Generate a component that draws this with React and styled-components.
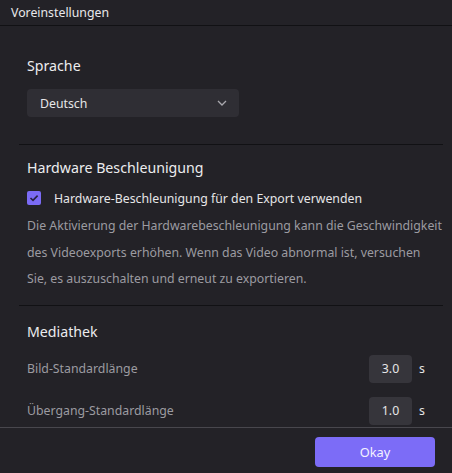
import React from "react";
import styled, { createGlobalStyle } from "styled-components";

const Global = createGlobalStyle`
  html, body { margin: 0; padding: 0; background: #232227; }
  * { box-sizing: border-box; }
  body { font-family: "Noto Sans", "Open Sans", sans-serif; }
`;

const Dialog = styled.div`
  width: 452px;
  height: 473px;
  display: flex;
  flex-direction: column;
  background: #232227;
  color: #e4e4e6;
  overflow: hidden;
`;

const TitleBar = styled.div`
  height: 26px;
  flex: none;
  display: flex;
  align-items: center;
  padding-left: 11px;
  font-size: 12.3px;
  color: #e8e8ea;
  border-bottom: 1px solid #111114;
`;

const Body = styled.div`
  flex: 1;
  overflow: hidden;
  padding: 30px 9px 0 19px;
`;

const Section = styled.section`
  padding: ${(p) => p.$top}px 0 ${(p) => p.$bottom}px 8px;
  border-bottom: ${(p) => (p.$last ? "none" : "1px solid #111114")};
`;

const Heading = styled.h2`
  margin: 0;
  height: 20px;
  line-height: 20px;
  font-size: 14.2px;
  font-weight: 400;
  color: #ececee;
`;

const Select = styled.div`
  margin-top: 13px;
  width: 212px;
  height: 28px;
  border-radius: 4px;
  background: #2f2e34;
  display: flex;
  align-items: center;
  justify-content: space-between;
  padding: 0 12px 0 13px;
  font-size: 12.3px;
  color: #e6e6e8;
`;

const CheckRow = styled.label`
  margin-top: 10px;
  height: 20px;
  display: flex;
  align-items: center;
  gap: 13px;
  font-size: 12.3px;
  color: #e6e6e8;
`;

const Box = styled.span`
  width: 14px;
  height: 14px;
  border-radius: 2px;
  background: #7b6bf5;
  display: flex;
  align-items: center;
  justify-content: center;
`;

const Note = styled.p`
  margin: 5px 0 0;
  font-size: 12.3px;
  line-height: 26.5px;
  color: #9c9ba1;
`;

const FieldRow = styled.div`
  margin-top: ${(p) => p.$gap}px;
  height: 28px;
  display: flex;
  align-items: center;
  font-size: 12.3px;
  color: #9c9ba1;
`;

const FieldLabel = styled.span`
  flex: 1;
`;

const NumberBox = styled.div`
  width: 43px;
  height: 28px;
  border-radius: 4px;
  background: #36353b;
  color: #e6e6e8;
  display: flex;
  align-items: center;
  justify-content: center;
`;

const Unit = styled.span`
  width: 31px;
  padding-left: 7px;
  color: #e6e6e8;
`;

const Footer = styled.div`
  flex: none;
  height: 46px;
  border-top: 1px solid #48474d;
  display: flex;
  justify-content: flex-end;
  padding: 9px 17px 0 0;
`;

const Button = styled.button`
  width: 120px;
  height: 30px;
  border: none;
  border-radius: 4px;
  background: #7c6cf7;
  color: #f4f2ff;
  font-family: inherit;
  font-size: 12.8px;
`;

const Chevron = () => (
  <svg width="10" height="6" viewBox="0 0 10 6" fill="none">
    <path d="M1 1l4 4 4-4" stroke="#a9a8ae" strokeWidth="1.3" />
  </svg>
);

const Check = () => (
  <svg width="10" height="8" viewBox="0 0 10 8" fill="none">
    <path d="M1.5 4l2.5 2.4L8.6 1.6" stroke="#27223f" strokeWidth="1.6" />
  </svg>
);

export default function App() {
  return (
    <>
      <Global />
      <Dialog>
        <TitleBar>Voreinstellungen</TitleBar>
        <Body>
          <Section $top={0} $bottom={27}>
            <Heading>Sprache</Heading>
            <Select>
              <span>Deutsch</span>
              <Chevron />
            </Select>
          </Section>
          <Section $top={13} $bottom={12}>
            <Heading>Hardware Beschleunigung</Heading>
            <CheckRow>
              <Box>
                <Check />
              </Box>
              Hardware-Beschleunigung für den Export verwenden
            </CheckRow>
            <Note>
              Die Aktivierung der Hardwarebeschleunigung kann die Geschwindigkeit
              des Videoexports erhöhen. Wenn das Video abnormal ist, versuchen
              Sie, es auszuschalten und erneut zu exportieren.
            </Note>
          </Section>
          <Section $top={16} $bottom={0} $last>
            <Heading>Mediathek</Heading>
            <FieldRow $gap={13}>
              <FieldLabel>Bild-Standardlänge</FieldLabel>
              <NumberBox>3.0</NumberBox>
              <Unit>s</Unit>
            </FieldRow>
            <FieldRow $gap={14}>
              <FieldLabel>Übergang-Standardlänge</FieldLabel>
              <NumberBox>1.0</NumberBox>
              <Unit>s</Unit>
            </FieldRow>
          </Section>
        </Body>
        <Footer>
          <Button>Okay</Button>
        </Footer>
      </Dialog>
    </>
  );
}
